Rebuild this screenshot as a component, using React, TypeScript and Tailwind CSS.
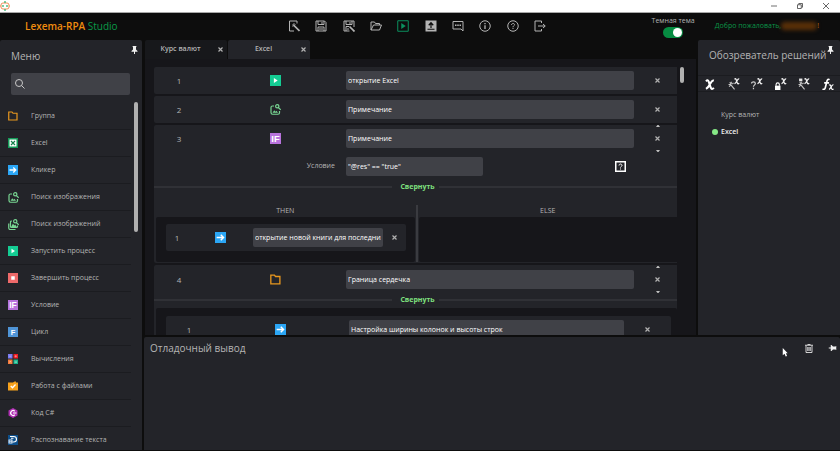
import React, { useState } from 'react';
import clsx from 'clsx';

type IconProps = { className?: string };

/* ---------- toolbar icons ---------- */

const stroke = { fill: 'none', stroke: 'currentColor', strokeWidth: 2 } as const;

const EditFileIcon = () => (
  <svg viewBox="0 0 24 24" className="size-3" {...stroke}>
    <path d="M18 7V2H3v20h9" />
    <path d="M11 10l12 12" strokeWidth="3.5" />
    <path d="M8 12h3M12 6v4M9 8l2 2M15 9l-2 2" strokeWidth="1.6" />
  </svg>
);

const SaveIcon = () => (
  <svg viewBox="0 0 24 24" className="size-3" {...stroke}>
    <path d="M2 2h17l3 3v17H2z" />
    <path d="M6 2v7h12V2M14 4v4M6 22v-8h12v8M8 18h8" />
  </svg>
);

const SaveAsIcon = () => (
  <svg viewBox="0 0 24 24" className="size-3" {...stroke}>
    <path d="M22 14V2H2v20h11" />
    <path d="M6 2v7h12V2M14 4v4M6 22v-9h6M8 18h4" />
    <path d="M13 13l10 10" strokeWidth="3.5" />
  </svg>
);

const OpenIcon = () => (
  <svg viewBox="0 0 24 24" className="size-3" {...stroke}>
    <path d="M2 20V4h7l2 3h8v3M2 20l5-10h16l-4 10z" />
  </svg>
);

const PlayIcon = () => (
  <svg viewBox="0 0 24 24" className="size-3" {...stroke}>
    <path d="M1.5 1.5h21v21h-21z" />
    <path d="M8.500 6l9 6-9 6z" fill="currentColor" stroke="none" />
  </svg>
);

const UploadIcon = () => (
  <svg viewBox="0 0 24 24" className="size-3">
    <path d="M1 1h22v22H1z" fill="currentColor" />
    <path d="M12 16V6M7.500 10.500L12 5.500l4.500 5M5 18.500h14" fill="none" stroke="#0d0d0d" strokeWidth="2.400" />
  </svg>
);

const CommentIcon = () => (
  <svg viewBox="0 0 24 24" className="size-3" {...stroke}>
    <path d="M2 3h20v19l-4-4H2z" />
    <path d="M6 10.500h3M10.500 10.500h3M15 10.500h3" strokeWidth="2.600" />
  </svg>
);

const InfoIcon = () => (
  <svg viewBox="0 0 24 24" className="size-3" {...stroke}>
    <circle cx="12" cy="12" r="10.500" />
    <path d="M12 10.500V18M12 6v2.500" strokeWidth="2.600" />
  </svg>
);

const HelpIcon = () => (
  <svg viewBox="0 0 24 24" className="size-3" {...stroke}>
    <circle cx="12" cy="12" r="10.500" />
    <path d="M9 10c0-4 6-4 6-.5 0 2-3 2.300-3 5M12 16v2" />
  </svg>
);

const ExitIcon = () => (
  <svg viewBox="0 0 24 24" className="size-3" {...stroke}>
    <path d="M15 6V2H2v20h13v-4" />
    <path d="M8 12h14M18 8l4.500 4-4.500 4" />
  </svg>
);

/* ---------- action icons ---------- */

const FolderIcon = ({ className = 'size-[10px]' }: IconProps) => (
  <svg viewBox="0 0 20 20" className={className} fill="none" stroke="#e8971e" strokeWidth="2.400">
    <path d="M1.500 18V2H8l2 2.500h8V18z" />
  </svg>
);

const ExcelIcon = ({ className = 'size-[10px]' }: IconProps) => (
  <svg viewBox="0 0 20 20" className={className}>
    <path d="M0 0h20v20H0z" fill="#159a58" />
    <path d="M3 3h14v14H3z" fill="#fff" />
    <path d="M6 6l8 8M14 6l-8 8" stroke="#14804a" strokeWidth="2.400" />
  </svg>
);

const ClickerIcon = ({ className = 'size-[10px]' }: IconProps) => (
  <svg viewBox="0 0 20 20" className={className}>
    <path d="M0 0h20v20H0z" fill="#2ba6f5" />
    <path d="M3 10h12M10.500 5l5 5-5 5" fill="none" stroke="#fff" strokeWidth="2.600" />
  </svg>
);

const ImageSearchIcon = ({ className = 'size-[11px]' }: IconProps) => (
  <svg viewBox="0 0 22 22" className={className} fill="none" stroke="#78d692" strokeWidth="2.400">
    <path d="M8 4H5Q2 4 2 7v10q0 3.500 3 3.500h11q3 0 3-3V14" />
    <circle cx="14.500" cy="4.500" r="3.300" />
    <path d="M17 7.500l4.500 4" />
    <path d="M5 17.500l3.500-5 2.500 3 2-2 3 4z" fill="#78d692" stroke="none" />
  </svg>
);

const ImagesSearchIcon = ({ className = 'size-[11px]' }: IconProps) => (
  <svg viewBox="0 0 22 22" className={className} fill="none" stroke="#78d692" strokeWidth="2.400">
    <path d="M1.500 9v9q0 3 3 3H15M8 4H7Q5 4 5 6v9q0 2 2 2h9q3 0 3-2v-2" />
    <circle cx="14.500" cy="4.500" r="3.300" />
    <path d="M17 7.500l4.500 4" />
    <path d="M6 16l4-7 2.500 4 2-2 3 5z" fill="#78d692" stroke="none" />
  </svg>
);

const RunIcon = ({ className = 'size-[10px]' }: IconProps) => (
  <svg viewBox="0 0 20 20" className={className}>
    <path d="M0 0h20v20H0z" fill="#14cc93" />
    <path d="M7 5.500l7 4.500-7 4.500z" fill="#fff" />
  </svg>
);

const StopIcon = ({ className = 'size-[10px]' }: IconProps) => (
  <svg viewBox="0 0 20 20" className={className}>
    <path d="M0 0h20v20H0z" fill="#ee6a6a" />
    <path d="M6.500 6.500h7v7h-7z" fill="#fff" />
  </svg>
);

const IfIcon = ({ className = 'size-[10px]' }: IconProps) => (
  <svg viewBox="0 0 20 20" className={className}>
    <path d="M0 0h20v20H0z" fill="#b873dc" />
    <text x="10" y="16" textAnchor="middle" fill="#fff" fontFamily="Liberation Sans, sans-serif" fontWeight="700" fontSize="17">IF</text>
  </svg>
);

const LoopIcon = ({ className = 'size-[10px]' }: IconProps) => (
  <svg viewBox="0 0 20 20" className={className}>
    <path d="M0 0h20v20H0z" fill="#4f94d6" />
    <text x="10" y="15" textAnchor="middle" fill="#fff" fontFamily="Liberation Sans, sans-serif" fontWeight="700" fontSize="15">F</text>
  </svg>
);

const CalcIcon = ({ className = 'size-[10px]' }: IconProps) => (
  <svg viewBox="0 0 20 20" className={className}>
    <path d="M0 0h9v9H0z" fill="#7a7cf0" />
    <path d="M11 0h9v9h-9z" fill="#ee1c24" />
    <path d="M0 11h9v9H0z" fill="#f47b3d" />
    <path d="M11 11h9v9h-9z" fill="#16b58a" />
    <path d="M2.500 4.500h4M13 4.500h5M15.500 2v5M3 14l3 3M6 14l-3 3M13 14.500h5M13 17h5" stroke="#fff" strokeOpacity=".7" />
  </svg>
);

const FilesIcon = ({ className = 'size-[10px]' }: IconProps) => (
  <svg viewBox="0 0 20 20" className={className}>
    <path d="M0 19V3h10l3-2h3v2h4v16z" fill="#f5a11c" />
    <path d="M5.500 10l3.500 3.500 6-6.500" fill="none" stroke="#fff" strokeWidth="2.600" />
  </svg>
);

const CSharpIcon = ({ className = 'size-[10px]' }: IconProps) => (
  <svg viewBox="0 0 20 20" className={className}>
    <path d="M10 0l9 5v10l-9 5-9-5V5z" fill="#b02fb4" />
    <path d="M13.500 6.500a4.800 4.800 0 1 0 0 7M10 10h7" fill="none" stroke="#fff" strokeWidth="2.400" />
  </svg>
);

const OcrIcon = ({ className = 'size-[10px]' }: IconProps) => (
  <svg viewBox="0 0 20 20" className={className}>
    <path d="M0 0h20v20H0z" fill="#0d4f8b" />
    <path d="M4 3h7q6 0 6 5.500T11 14H9M6 6.500h5" fill="none" stroke="#fff" strokeWidth="2.200" />
    <path d="M1 9h8v8H1z" fill="#e8f1fa" />
    <path d="M3 11.500h4M3 14.500h4" stroke="#0d4f8b" strokeWidth="1.500" />
  </svg>
);

const PinIcon = ({ className }: IconProps) => (
  <svg viewBox="0 0 14 16" className={clsx('h-2 w-[7px]', className)} fill="#f0f0f0">
    <path d="M3 0h8v1.500h-1V7l3 3v1.500H8V16H6v-4.500H1V10l3-3V1.500H3z" />
  </svg>
);

/* ---------- variable tools in the solution explorer ---------- */

const xPath = 'M1 2.500Q3 0 4 3l2 6q1 3 3.500.5M9.500 1.500Q7.500 1 5.500 5T1 10.500';

const SmallX = () => (
  <g transform="translate(11 0)">
    <path d={xPath} fill="none" stroke="#f0f0f0" strokeWidth="2.400" />
  </g>
);

const Wand = () => (
  <path d="M5 12l7 9M1 12h4M6 7v4M3 8l3 3M10 9l-2 2M2 16l3-3" fill="none" stroke="#c8c8c8" strokeWidth="2" />
);

const variableTools = [
  {
    label: 'Переменная',
    icon: (
      <g transform="translate(2 2) scale(1.700)">
        <path d={xPath} fill="none" stroke="#fff" strokeWidth="2.200" />
      </g>
    ),
  },
  { label: 'Создать переменную', icon: <><SmallX /><Wand /></> },
  {
    label: 'Найти переменную',
    icon: <><SmallX /><path d="M1 10c0-4 7-4 7 0 0 3-3.500 3-3.500 6M4.500 18v2.500" fill="none" stroke="#d0d0d0" strokeWidth="2.200" /></>,
  },
  {
    label: 'Защитить переменную',
    icon: (
      <>
        <SmallX />
        <path d="M0 14h10v8H0z" fill="#fff" />
        <path d="M2 14v-2q0-3 3-3t3 3v2" fill="none" stroke="#fff" strokeWidth="2" />
      </>
    ),
  },
  {
    label: 'Преобразовать переменную',
    icon: <><SmallX /><Wand /><path d="M2 1h6v5H2z" fill="#e8e8e8" /></>,
  },
  {
    label: 'Функция',
    icon: (
      <>
        <path d="M14 3q-4-2-5 3L6 18q-1 4-5 2M4 9h9" fill="none" stroke="#fff" strokeWidth="3" />
        <g transform="translate(12 11) scale(.95)">
          <path d={xPath} fill="none" stroke="#fff" strokeWidth="2.200" />
        </g>
      </>
    ),
  },
];

/* ---------- data ---------- */

const tools = [
  { label: 'Новый', Icon: EditFileIcon },
  { label: 'Сохранить', Icon: SaveIcon },
  { label: 'Сохранить как', Icon: SaveAsIcon },
  { label: 'Открыть', Icon: OpenIcon },
  { label: 'Запустить', Icon: PlayIcon, accent: true },
  { label: 'Загрузить', Icon: UploadIcon },
  { label: 'Сообщения', Icon: CommentIcon },
  { label: 'Информация', Icon: InfoIcon },
  { label: 'Справка', Icon: HelpIcon },
  { label: 'Выход', Icon: ExitIcon },
];

const actions = [
  { label: 'Группа', Icon: FolderIcon },
  { label: 'Excel', Icon: ExcelIcon },
  { label: 'Кликер', Icon: ClickerIcon },
  { label: 'Поиск изображения', Icon: ImageSearchIcon },
  { label: 'Поиск изображений', Icon: ImagesSearchIcon },
  { label: 'Запустить процесс', Icon: RunIcon },
  { label: 'Завершить процесс', Icon: StopIcon },
  { label: 'Условие', Icon: IfIcon },
  { label: 'Цикл', Icon: LoopIcon },
  { label: 'Вычисления', Icon: CalcIcon },
  { label: 'Работа с файлами', Icon: FilesIcon },
  { label: 'Код C#', Icon: CSharpIcon },
  { label: 'Распознавание текста', Icon: OcrIcon },
];

/* ---------- parts ---------- */

const CloseButton = ({ label }: { label: string }) => (
  <button aria-label={label} className="flex size-2 items-center justify-center text-[#b0b0b0]">
    <svg viewBox="0 0 10 10" className="size-[5px]" stroke="currentColor" strokeWidth="2.400">
      <path d="M1 1l8 8M9 1L1 9" />
    </svg>
  </button>
);

const MoveButton = ({ down }: { down?: boolean }) => (
  <button aria-label={down ? 'Вниз' : 'Вверх'} className="text-[#c0c0c0]">
    <svg viewBox="0 0 8 4" className={clsx('h-[2px] w-1', down && 'rotate-180')} fill="currentColor">
      <path d="M0 4l3-4h2l3 4z" />
    </svg>
  </button>
);

const Field = ({ value, label, className }: { value: string; label: string; className?: string }) => (
  <input
    aria-label={label}
    defaultValue={value}
    className={clsx('h-[19px] min-w-0 rounded-xs bg-[#404147] px-[2px] text-[7px] font-normal text-white outline-none', className)}
  />
);

type StepProps = { num: number; Icon: React.FC<IconProps>; title: string; columns: string; movable?: boolean };

const Step = ({ num, Icon, title, columns, movable }: StepProps) => (
  <div className={clsx('grid items-center', columns)}>
    <span className="text-center text-[8px]">{num}</span>
    <Icon className="size-[11px] justify-self-center" />
    <Field value={title} label={`Шаг ${num}`} />
    <div className="relative flex h-[19px] flex-col items-center justify-center">
      {movable && <span className="absolute -top-1 flex"><MoveButton /></span>}
      <CloseButton label={`Удалить шаг ${num}`} />
      {movable && <span className="absolute -bottom-1 flex"><MoveButton down /></span>}
    </div>
  </div>
);

const mainColumns = 'grid-cols-[50px_142px_1fr_43px] [&>div]:pl-1';

const Collapse = () => (
  <div className="flex items-center gap-1">
    <span className="h-[2px] flex-1 bg-[#303136]" />
    <button className="pl-1 text-[7px] leading-3 font-bold text-[#7fe07f]">Свернуть</button>
    <span className="h-[2px] flex-1 bg-[#303136]" />
  </div>
);

const TitleBar = () => (
  <div className="flex h-[13px] shrink-0 items-center justify-between border-b border-[#a8a8a8] bg-white">
    <svg viewBox="0 0 20 20" className="size-[10px]" fill="none">
      <path d="M6 4Q2 4 2 8v4q0 4 4 4h8q4 0 4-4V8q0-4-4-4z" stroke="#f0905a" strokeWidth="2" />
      <path d="M10 0v4M10 16v4M6 8v4M14 8v4" stroke="#2fb36e" strokeWidth="2.500" />
      <path d="M0 8v4M20 8v4" stroke="#f0905a" strokeWidth="2" />
    </svg>
    <div className="flex gap-5 pr-[11px] text-[#404040]">
      <button aria-label="Свернуть окно">
        <svg viewBox="0 0 12 12" className="size-[6px]" stroke="currentColor" strokeWidth="1.500"><path d="M0 6h12" /></svg>
      </button>
      <button aria-label="Развернуть окно">
        <svg viewBox="0 0 12 12" className="size-[6px]" fill="none" stroke="currentColor" strokeWidth="1.600"><path d="M1 3.500h7.500V11H1zM3.500 3V1H11v7.500H9" /></svg>
      </button>
      <button aria-label="Закрыть окно">
        <svg viewBox="0 0 12 12" className="size-[6px]" stroke="currentColor" strokeWidth="1.600"><path d="M0 0l12 12M12 0L0 12" /></svg>
      </button>
    </div>
  </div>
);

const Header = () => {
  const [dark, setDark] = useState(true);

  return (
    <header className="flex h-[27px] shrink-0 items-center pr-[21px] pb-px">
      <h1 className="w-[263px] pl-[25px] text-[10px] font-semibold text-[#f08c0f]">
        Lexema-RPA <span className="font-normal text-[#0a9a48]">Studio</span>
      </h1>
      <nav className="ml-[25px] flex w-[258px] justify-between">
        {tools.map(({ label, Icon, accent }) => (
          <button key={label} aria-label={label} className={accent ? 'text-[#0b8f5e]' : 'text-[#b4b4b4]'}>
            <Icon />
          </button>
        ))}
      </nav>
      <label className="ml-auto flex flex-col items-center text-[7px] leading-[12px] font-normal text-[#b4b4b4]">
        Темная тема
        <input type="checkbox" className="peer sr-only" checked={dark} onChange={(e) => setDark(e.target.checked)} />
        <span className="flex h-[11px] w-5 items-center rounded-full bg-[#555] px-px peer-checked:justify-end peer-checked:bg-[#078c42]">
          <span className="size-[9px] rounded-full bg-white" />
        </span>
      </label>
      <p className="ml-5 flex items-center text-[7px] font-normal text-[#0a9648]">
        Добро пожаловать,
        <span className="h-2 w-9 rounded-full bg-[#5a3008] blur-[2px]" />
        <span className="text-[#c87412]">!</span>
      </p>
    </header>
  );
};

const Sidebar = () => (
  <aside className="flex w-[142px] shrink-0 flex-col rounded-t-xs bg-[#232429]">
    <div className="flex h-[33px] justify-between pr-1 pl-[11px]">
      <h2 className="self-center text-[10px] font-normal">Меню</h2>
      <button aria-label="Закрепить меню" className="mt-[6px] self-start"><PinIcon /></button>
    </div>
    <label className="mr-3 ml-[11px] flex h-[22px] shrink-0 items-center rounded-xs bg-[#404147] px-1">
      <svg viewBox="0 0 20 20" className="size-[10px]" fill="none" stroke="#c8c8c8" strokeWidth="2">
        <circle cx="8" cy="8" r="7" />
        <path d="M13 13l6 6" />
      </svg>
      <input aria-label="Поиск" className="min-w-0 flex-1 bg-transparent px-1 text-[7px] outline-none" />
    </label>
    <div className="mt-[7px] flex min-h-0 flex-1 justify-between overflow-hidden">
      <ul className="w-[131px] pt-px">
        {actions.map(({ label, Icon }) => (
          <li key={label} className="border-b border-[#1b1c20] last:border-0">
            <button className="flex h-[26px] w-full items-center pl-2 text-[7px] font-medium">
              <span className="w-[23px]"><Icon /></span>
              {label}
            </button>
          </li>
        ))}
      </ul>
      <span className="mr-1 h-[130px] w-1 rounded-full bg-[#b0b0b0]" />
    </div>
  </aside>
);

const Tabs = () => (
  <div className="flex h-[19px] shrink-0 gap-px" role="tablist">
    {['Курс валют', 'Excel'].map((name) => (
      <div
        key={name}
        className={clsx('flex w-[82px] items-center rounded-t-xs pr-[3px]', name === 'Excel' ? 'bg-[#232429]' : 'bg-[#17181b]')}
      >
        <button role="tab" aria-selected={name === 'Excel'} className="flex-1 text-[7px] font-semibold">{name}</button>
        <CloseButton label={`Закрыть ${name}`} />
      </div>
    ))}
  </div>
);

const Workspace = () => (
  <main className="ml-px flex min-h-0 min-w-0 flex-1 flex-col">
    <Tabs />
    <div className="flex min-h-0 flex-1 gap-[3px] overflow-hidden bg-[#16161a] pt-2 pr-3 pl-[9px]">
      <div className="flex flex-1 flex-col gap-[2px]">
        <section className="rounded-l-xs bg-[#232429] py-1">
          <Step num={1} Icon={RunIcon} title="открытие Excel" columns={mainColumns} />
        </section>
        <section className="rounded-l-xs bg-[#232429] py-1">
          <Step num={2} Icon={ImageSearchIcon} title="Примечание" columns={mainColumns} />
        </section>

        <section className="rounded-l-xs bg-[#232429] pt-1 pb-px">
          <Step num={3} Icon={IfIcon} title="Примечание" columns={mainColumns} movable />
          <div className="mt-[9px] mb-[5px] grid grid-cols-[192px_1fr_62px] items-center">
            <span className="pr-[11px] text-right">Условие</span>
            <Field value={'"@res" == "true"'} label="Условие" className="w-[137px]" />
            <button aria-label="Проверить условие">
              <svg viewBox="0 0 22 22" className="size-[11px]" fill="none" stroke="#fff">
                <path d="M1.500 1.500h19v19h-19z" strokeWidth="3" />
                <path d="M8 9c0-4 6-4 6 0 0 2-3 2-3 4M11 15v2" strokeWidth="2" />
              </svg>
            </button>
          </div>
          <Collapse />
          <div className="mt-3 flex gap-px">
            <div className="flex flex-1 flex-col pl-[2px]">
              <h3 className="text-center leading-3">THEN</h3>
              <div className="flex-1 rounded-xs bg-[#16161a] pt-[7px] pr-[9px] pb-[11px] pl-[10px]">
                <div className="rounded-xs bg-[#232429] py-1">
                  <Step num={1} Icon={ClickerIcon} title="открытие новой книги для последних версий" columns="grid-cols-[22px_65px_1fr_23px]" />
                </div>
              </div>
            </div>
            <span className="w-[2px] bg-[#3a3b40]" />
            <div className="flex flex-1 flex-col">
              <h3 className="text-center leading-3">ELSE</h3>
              <div className="flex-1 rounded-l-xs bg-[#16161a]" />
            </div>
          </div>
        </section>

        <section className="rounded-l-xs bg-[#232429] pt-[5px] pl-[2px]">
          <div className="-ml-[2px]">
            <Step num={4} Icon={FolderIcon} title="Граница сердечка" columns={mainColumns} movable />
            <div className="mt-[5px] mb-[2px]"><Collapse /></div>
          </div>
          <div className="rounded-xs bg-[#16161a] pt-2 pr-[6px] pl-[10px]">
            <div className="rounded-xs bg-[#232429] py-1">
              <Step num={1} Icon={ClickerIcon} title="Настройка ширины колонок и высоты строк" columns="grid-cols-[46px_137px_1fr_47px]" />
            </div>
          </div>
        </section>
      </div>
      <span className="h-4 w-1 shrink-0 rounded-full bg-[#b0b0b0]" />
    </div>
  </main>
);

const SolutionExplorer = () => (
  <aside className="flex w-[142px] shrink-0 flex-col rounded-t-xs bg-[#232429]">
    <div className="flex h-[35px] justify-between pr-[6px] pl-[11px]">
      <h2 className="self-center pb-1 text-[10px] font-normal whitespace-nowrap">Обозреватель решений</h2>
      <button aria-label="Закрепить обозреватель" className="mt-[6px] self-start"><PinIcon /></button>
    </div>
    <div className="flex h-[17px] items-center justify-between border-y border-[#1b1c20] pr-[6px] pl-[6px]">
      {variableTools.map(({ label, icon }) => (
        <button key={label} aria-label={label}>
          <svg viewBox="0 0 22 22" className="size-3">{icon}</svg>
        </button>
      ))}
    </div>
    <ul className="mt-[17px] flex flex-col gap-[5px] pl-[14px] text-[7px] leading-3 font-semibold">
      <li className="pl-[9px] font-medium">Курс валют</li>
      <li className="flex items-center gap-[3px] text-[#f0f0f0]">
        <span className="size-[6px] rounded-full bg-[#86e986]" />
        Excel
      </li>
    </ul>
  </aside>
);

const DebugOutput = () => (
  <section className="relative h-[113px] shrink-0 rounded-t-xs bg-[#232429]">
    <div className="flex items-center justify-between pt-[3px] pr-1 pl-[6px]">
      <h2 className="text-[10px] leading-4 font-normal">Отладочный вывод</h2>
      <div className="flex items-center gap-4">
        <button aria-label="Очистить вывод">
          <svg viewBox="0 0 16 18" className="h-[9px] w-2" fill="none" stroke="#e4e4e4" strokeWidth="1.800">
            <path d="M0 2.500h16M5 1h6M2 3v14h12V3M5.500 6v8M8 6v8M10.500 6v8" />
          </svg>
        </button>
        <button aria-label="Закрепить вывод"><PinIcon className="rotate-90" /></button>
      </div>
    </div>
    <svg viewBox="0 0 12 20" className="absolute top-[11px] right-[52px] h-[9px] w-[6px]" fill="#fff">
      <path d="M1 0v16l4-3.500L7.500 19l3-1L8 11.500h4z" />
    </svg>
  </section>
);

const App: React.FC = () => (
  <div className="flex h-screen flex-col overflow-hidden bg-[#0d0d0d] font-['Open_Sans',sans-serif] text-[7px] font-medium text-[#b4b4b4]">
    <TitleBar />
    <Header />
    <div className="flex min-h-0 flex-1 gap-[2px] pb-px">
      <Sidebar />
      <div className="flex min-w-0 flex-1 flex-col gap-[2px]">
        <div className="flex min-h-0 flex-1 gap-[2px]">
          <Workspace />
          <SolutionExplorer />
        </div>
        <DebugOutput />
      </div>
    </div>
  </div>
);

export default App;
